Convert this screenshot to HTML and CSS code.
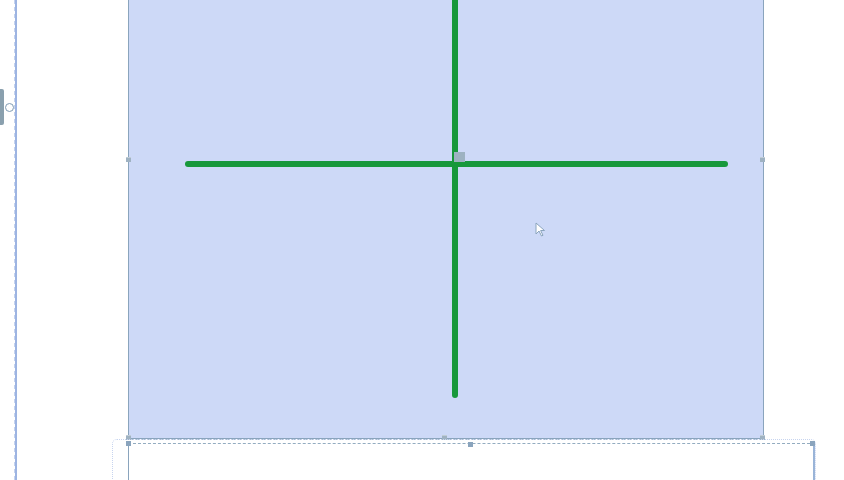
FILE: index.html
```html
<!DOCTYPE html>
<html>
<head>
<meta charset="utf-8">
<link rel="stylesheet" href="styles.css">
</head>
<body>
<div class="canvas">
  <div class="guide-left"></div>
  <div class="guide-left-dash"></div>
  <div class="tab"></div>
  <div class="tab-circle"></div>

  <div class="sel-rect"></div>
  <div class="sel-bottom-dash"></div>

  <div class="h-bar"></div>
  <div class="v-bar"></div>
  <div class="center-handle"></div>

  <div class="handle h-l"></div>
  <div class="handle h-r"></div>
  <div class="handle h-bl"></div>
  <div class="handle h-bm"></div>
  <div class="handle h-br"></div>

  <div class="frame2"></div>
  <div class="frame2-dots"></div>
  <div class="handle2 h2-l"></div>
  <div class="handle2 h2-m"></div>
  <div class="handle2 h2-r"></div>

  <svg class="cursor" width="12" height="16" viewBox="0 0 12 16">
    <path d="M1 1 L1 12 L4 9 L6.5 14 L8 13.3 L5.6 8.5 L9.5 8.5 Z" fill="#ffffff" stroke="#8aa4bd" stroke-width="1"/>
  </svg>
</div>
</body>
</html>
```
FILE: styles.css
```css
html, body {
  margin: 0;
  padding: 0;
  background: #ffffff;
  width: 844px;
  height: 480px;
  overflow: hidden;
  font-family: "Liberation Sans", Arial, sans-serif;
}
.canvas {
  position: relative;
  width: 844px;
  height: 480px;
}
.guide-left {
  position: absolute;
  left: 15px;
  top: 0;
  width: 2px;
  height: 480px;
  background: #9db4e2;
}
.guide-left-dash {
  position: absolute;
  left: 14px;
  top: 0;
  width: 1px;
  height: 480px;
  background: repeating-linear-gradient(to bottom, #c5d3ee 0 4px, transparent 4px 7px);
}
.tab {
  position: absolute;
  left: 0;
  top: 89px;
  width: 4px;
  height: 36px;
  background: #8aa0ae;
  border-radius: 0 2px 2px 0;
}
.tab-circle {
  position: absolute;
  left: 5px;
  top: 103px;
  width: 7px;
  height: 7px;
  border: 1px solid #7f9bb3;
  border-radius: 50%;
  background: #ffffff;
}
.sel-rect {
  position: absolute;
  left: 128px;
  top: -2px;
  width: 634px;
  height: 440px;
  background: #cdd9f7;
  border-left: 1px solid #8aa4bd;
  border-right: 1px solid #8aa4bd;
  border-bottom: 1px solid #8aa4bd;
}
.sel-bottom-dash {
  position: absolute;
  left: 129px;
  top: 439px;
  width: 634px;
  height: 1px;
  background: repeating-linear-gradient(to right, #a7bccd 0 2px, transparent 2px 3px);
}
.h-bar {
  position: absolute;
  left: 185px;
  top: 161px;
  width: 543px;
  height: 6px;
  background: #17983b;
  border-radius: 3px;
}
.v-bar {
  position: absolute;
  left: 452px;
  top: -4px;
  width: 6px;
  height: 402px;
  background: #17983b;
  border-radius: 3px;
}
.center-handle {
  position: absolute;
  left: 454px;
  top: 152px;
  width: 11px;
  height: 10px;
  background: #9db2c1;
}
.handle {
  position: absolute;
  width: 5px;
  height: 4px;
  background: #9fb2c2;
  border-top: 1px solid #c0ccd6;
}
.h-l { left: 126px; top: 157px; }
.h-r { left: 760px; top: 157px; }
.h-bl { left: 126px; top: 435px; }
.h-bm { left: 442px; top: 435px; }
.h-br { left: 760px; top: 435px; }
.frame2 {
  position: absolute;
  left: 128px;
  top: 443px;
  width: 684px;
  height: 60px;
  border-top: 1px dashed #93acc0;
  border-left: 1px solid #8aa4bd;
  border-right: 2px solid #9ab4d8;
}
.frame2-dots {
  position: absolute;
  left: 112px;
  top: 439px;
  width: 702px;
  height: 60px;
  border: 1px dotted #c7d4ef;
  border-radius: 5px;
}
.handle2 {
  position: absolute;
  width: 5px;
  height: 5px;
  background: #8aa4bd;
}
.h2-l { left: 126px; top: 441px; }
.h2-m { left: 468px; top: 442px; }
.h2-r { left: 810px; top: 441px; }
.cursor {
  position: absolute;
  left: 535px;
  top: 222px;
}
```
